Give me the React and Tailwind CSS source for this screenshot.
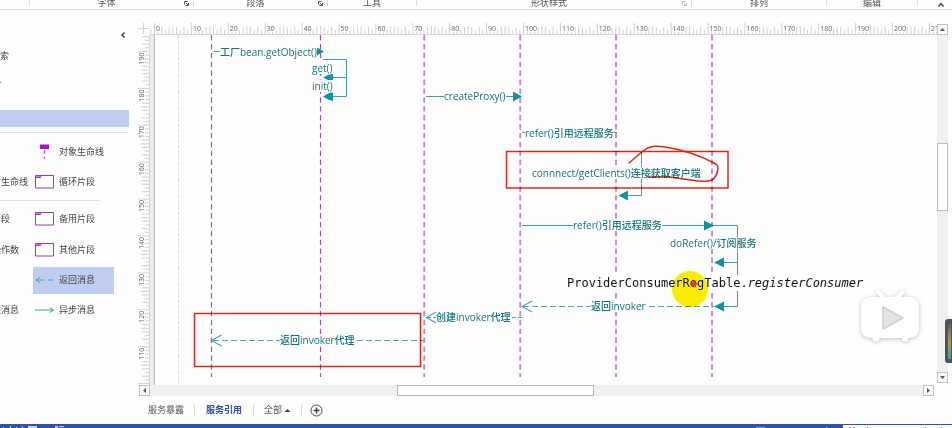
import React from "react";

const SANS = "font-['Open_Sans','Noto_Sans_CJK_SC',sans-serif]";

const groups = [
  { name: "", width: "w-[30px]" },
  { name: "字体", width: "w-[164px]", launcher: true },
  { name: "段落", width: "w-[134px]", launcher: true },
  { name: "工具", width: "w-[89px]" },
  { name: "形状样式", width: "w-[275px]", launcher: true, pale: true },
  { name: "排列", width: "w-[135px]" },
  { name: "编辑", width: "w-[91px]" },
];

function Ribbon() {
  return (
    <header className="flex h-[10px] overflow-hidden border-b border-[#d9dad9]">
      {groups.map((g, i) => (
        <div key={i} className={`${g.width} flex h-[6px] shrink-0 border-r border-[#dcdedc]`}>
          <span className="-mt-[3px] h-3 flex-1 text-center text-[9px] leading-3 text-[#555]">{g.name}</span>
          {g.launcher && (
            <button aria-label={g.name + "设置"} className="w-[10px] shrink-0">
              <svg width="7" height="7" className={g.pale ? "opacity-40" : ""} fill="none" stroke="#555">
                <path d="M1.5 4.5v-3h3M2.5 5.5h3M5.5 3v2.5M3 3l2.5 2.5" />
              </svg>
            </button>
          )}
        </div>
      ))}
      <div className="flex flex-1 justify-end pr-[7px]">
        <button aria-label="折叠功能区">
          <svg width="8" height="8" fill="none" stroke="#444" strokeWidth="1.4">
            <path d="M1.5 5.5 4 2.5l2.5 3" />
          </svg>
        </button>
      </div>
    </header>
  );
}

function FrameIcon() {
  return (
    <svg width="20" height="14" fill="none" stroke="#9b3bb5">
      <path d="M.5 .5h18v12.500h-18zM.5 2.500h5l1-2" />
      <path d="M1 1h5v1H1z" fill="#c78ad8" stroke="none" />
    </svg>
  );
}

function LifelineIcon() {
  return (
    <svg width="20" height="18">
      <path d="M5 1.500h9v4.500H5z" fill="#a312cf" />
      <path d="M9.500 7v4M9.500 14v2" stroke="#b05cc8" strokeWidth="1.300" />
    </svg>
  );
}

function ReturnIcon() {
  return (
    <svg width="20" height="8" fill="none" stroke="#3aa5c2">
      <path d="M5 1.500.800 4 5 6.500M1 4h8M13 4h5" />
    </svg>
  );
}

function AsyncIcon() {
  return (
    <svg width="20" height="8" fill="none" stroke="#2fa3b5">
      <path d="M0 4h18M14.500 1.500 18.500 4l-4 2.500" />
    </svg>
  );
}

function Shape({ left, name, icon, selected, height = "h-[30px]" }) {
  return (
    <div className={`flex ${height} items-center`}>
      <span className="w-[41px] shrink-0 whitespace-nowrap">{left}</span>
      <button
        className={`flex h-[27px] w-[81px] items-center gap-1 whitespace-nowrap pl-[2px] ${selected ? "bg-[#bfcdf1]" : ""}`}
      >
        {icon}
        <span>{name}</span>
      </button>
    </div>
  );
}

function Stencils() {
  return (
    <aside className="w-[138px] shrink-0 overflow-hidden text-[9px] leading-3 text-[#444]">
      <div className="flex h-[50px] items-center justify-end pr-3">
        <button aria-label="收起形状窗格">
          <svg width="6" height="8" fill="none" stroke="#333" strokeWidth="1.400">
            <path d="M4.500 1.500 2 4l2.500 2.500" />
          </svg>
        </button>
      </div>
      <div className="-mt-[10px] flex h-3 items-center">索</div>
      <div className="mt-5 h-px w-px bg-[#777]" />
      <div className="mt-[27px] h-[17px] w-[129px] bg-[#bfcdf1]" />
      <div className="mt-[5px] w-[129px] border-b border-[#dfe0e3]" />
      <div className="-ml-2 pt-1">
        <Shape name="对象生命线" icon={<LifelineIcon />} />
        <Shape left="对生命线" name="循环片段" icon={<FrameIcon />} />
      </div>
      <div className="mt-[3px] w-[100px] border-b border-[#dfe0e3]" />
      <div className="-ml-2 pt-[2px]">
        <Shape left="片段" name="备用片段" icon={<FrameIcon />} height="h-[31px]" />
        <Shape left="操作数" name="其他片段" icon={<FrameIcon />} height="h-[31px]" />
        <Shape name="返回消息" icon={<ReturnIcon />} selected />
        <Shape left="联消息" name="异步消息" icon={<AsyncIcon />} />
      </div>
    </aside>
  );
}

const UNIT = 3.69;

function TopRuler() {
  const ticks = [];
  for (let i = -1; i <= 220; i++) {
    const top = i % 10 === 0 ? 0 : i % 5 === 0 ? 3 : i % 2 === 0 ? 4 : 7;
    ticks.push(<path key={i} d={`M${(4.5 + i * UNIT).toFixed(1)} ${top}V12`} />);
  }
  return (
    <div className="h-3 min-w-0 flex-1 overflow-hidden border-b border-[#d5d7d5]">
      <svg width="820" height="12">
        <g stroke="#cfd1cf">{ticks}</g>
        <g fill="#666" className="text-[7px]">
          {Array.from({ length: 22 }, (_, i) => (
            <text key={i} x={6 + i * 10 * UNIT} y="8" stroke="#fdfefd" strokeWidth="2" paintOrder="stroke">
              {i * 10}
            </text>
          ))}
        </g>
      </svg>
    </div>
  );
}

function SideRuler() {
  const ticks = [];
  for (let i = -4; i <= 90; i++) {
    const left = i % 10 === 0 ? 0 : i % 5 === 0 ? 3 : i % 2 === 0 ? 4 : 7;
    ticks.push(<path key={i} d={`M${left} ${(16.5 + i * UNIT).toFixed(1)}H12`} />);
  }
  return (
    <div className="relative w-3 shrink-0 overflow-hidden border-r border-[#d5d7d5]">
      <svg width="12" height="900" className="absolute inset-0">
        <g stroke="#cfd1cf">{ticks}</g>
        <g fill="#666" className="text-[7px]" textAnchor="end">
          {Array.from({ length: 9 }, (_, i) => (
            <text
              key={i}
              transform={`translate(6 ${17.5 + i * 10 * UNIT}) rotate(-90)`}
              stroke="#fdfefd"
              strokeWidth="2"
              paintOrder="stroke"
            >
              {190 - i * 10}
            </text>
          ))}
        </g>
      </svg>
    </div>
  );
}

// Diagram coordinates are measured from the canvas's top-left corner.
const labels = [
  { x: 70, y: 17, text: "工厂bean.getObject()" },
  { x: 162, y: 33, text: "get()" },
  { x: 162, y: 51, text: "init()" },
  { x: 294, y: 61, text: "createProxy()" },
  { x: 375, y: 98, text: "refer()引用远程服务" },
  { x: 382, y: 138, text: "connnect/getClients()连接获取客户端" },
  { x: 423, y: 190, text: "refer()引用远程服务" },
  { x: 520, y: 208, text: "doRefer()/订阅服务" },
  { x: 441, y: 271, text: "返回invoker" },
  { x: 286, y: 282, text: "创建invoker代理" },
  { x: 130, y: 305, text: "返回invoker代理" },
];

function Diagram() {
  return (
    <div className="relative min-h-[300px] min-w-0 flex-1 overflow-hidden">
      <svg className="absolute inset-0" width="800" height="900" fill="none">
        <path d="M0 0h4v900H0z" fill="#ededed" />
        <path d="M4.500 0v900" stroke="#b9bbbd" />
        <path d="M28.500 0v900" stroke="#dcdcdc" strokeDasharray="4 1.500" />
        <g stroke="#a352b5" strokeWidth="1.200" strokeDasharray="5.400 3.500">
          <path d="M61.500 0v342M170.500 0v342" />
        </g>
        <g stroke="#bd85d3" strokeWidth="1.800" strokeDasharray="5.400 3.500">
          <path d="M274.200 0v342M370.200 0v342M466 0v342M562 0v342" />
        </g>
        <g stroke="#3f9fa9">
          <path d="M64 16.500h103M173 24.500h23.500v37H183M183 42.500h13.500" />
          <path d="M276 61.500h88M372 97.500h95M491.500 117v43.500H478" />
          <path d="M372 190.500h184M562 190.500h25.500v81H574M587.500 227.500H574" />
        </g>
        <g fill="#0d949f">
          <path d="M167 12.500v8l7-4zM183 39v7l-4-.500-6-3 6-3zM183 57.500v8.500l-4-1-6-3.500 6-3.500z" />
          <path d="M363 56.500v10l9-5zM478 155.500v10l-9.500-5zM554 185.500v10l10-5z" />
          <path d="M574 222.500v10l-10-5zM574 266.500v10l-10-5z" />
        </g>
        <g stroke="#4da7b1" strokeWidth="1.200">
          <path d="M373 271.500h191" strokeDasharray="6 3" />
          <path d="M362 282.500h10M277 282.500h9" strokeDasharray="4 2" />
          <path d="M63 305.500h211" strokeDasharray="6 3" />
          <path d="m382 266-10 5.500 10 5.500M286 277l-9.500 5.500L286 288M71.500 300l-10 5.500 10 5.500" />
        </g>
      </svg>
      {labels.map((l) => (
        <span
          key={l.x + "-" + l.y}
          className="absolute -translate-y-1/2 whitespace-nowrap bg-[#fdfefd] text-[10px] font-medium leading-3 text-[#15757c]"
          style={{ left: l.x, top: l.y }}
        >
          {l.text}
        </span>
      ))}
      <span className="absolute left-[417px] top-[240px] whitespace-nowrap bg-[#fdfefd] font-['DejaVu_Sans_Mono',monospace] text-[12px] leading-4 text-[#111]">
        ProviderConsumerRegTable.<i>registerConsumer</i>
      </span>
      <svg className="absolute inset-0 mix-blend-multiply" width="800" height="400" fill="none">
        <circle cx="540" cy="254" r="18" fill="#fdee00" />
        <g stroke="#dc2a1c" strokeWidth="1.500">
          <path d="M356.500 116.500H578v36.500H356.500zM44.500 278.500h226v53h-226z" />
          <path
            d="M479 128 493 116C500 110 506 111 515 112 535 115 553 122 566 129 570 132 567 142 562 145 555 148 540 145 520 142L499 142"
            strokeLinecap="round"
          />
        </g>
      </svg>
      <svg className="absolute left-[540px] top-[245px]" width="8" height="8" fill="#ee3a16">
        <path d="M4 0 5.500 2.500 8 4 5.500 5.500 4 8 2.500 5.500 0 4 2.500 2.500z" />
      </svg>
      <svg className="absolute right-[15px] top-[250px] drop-shadow-[0_1px_2px_rgba(0,0,0,0.25)]" width="66" height="60">
        <path d="m22 7 8 8M47 7l-8 8" stroke="#fff" strokeWidth="4" strokeLinecap="round" />
        <rect x="5" y="12" width="58" height="41" rx="9" fill="#fff" />
        <circle cx="20" cy="53" r="3.500" fill="#fff" />
        <circle cx="49" cy="53" r="3.500" fill="#fff" />
        <path d="M27 22v22l20-11z" fill="#e3e3e3" stroke="#d0d0d0" strokeWidth="1.500" strokeLinejoin="round" />
      </svg>
    </div>
  );
}

const arrows = {
  up: "M1 5h5L3.500 2z",
  down: "M1 2h5L3.500 5z",
  left: "M5 1v5L2 3.500z",
  right: "M2 1v5l3-2.500z",
};

function ScrollButton({ dir, label }) {
  return (
    <button
      aria-label={label}
      className="flex size-[11px] shrink-0 items-center justify-center border border-[#bfc1c1] bg-[#fdfefd]"
    >
      <svg width="7" height="7" fill="#555">
        <path d={arrows[dir]} />
      </svg>
    </button>
  );
}

function PageTabs() {
  return (
    <nav className="flex h-[28px] items-center text-[9px] leading-3 text-[#555]">
      <button className="px-[10px]">服务暴露</button>
      <span className="h-3 w-px bg-[#dcdcdc]" />
      <button className="px-[11px] font-bold text-[#2f4fa8]">服务引用</button>
      <span className="h-3 w-px bg-[#dcdcdc]" />
      <button className="flex items-center gap-[2px] px-[10px]">
        全部
        <svg width="7" height="5" fill="#444">
          <path d="M.500 4h6l-3-3z" />
        </svg>
      </button>
      <span className="h-3 w-px bg-[#dcdcdc]" />
      <button aria-label="插入页" className="pl-2">
        <svg width="13" height="13" fill="none" stroke="#444">
          <circle cx="6.500" cy="6.500" r="5.500" />
          <path d="M3.500 6.500h6M6.500 3.500v6" strokeWidth="1.500" />
        </svg>
      </button>
    </nav>
  );
}

function StatusBar() {
  return (
    <footer className="flex h-1 overflow-hidden bg-[#3352a9]">
      <svg width="70" height="4" fill="#c5cfeb">
        <path d="M3 3h1v1H3zM10 2h1v2h-1zM16 3h1v1h-1zM22 2h1v2h-1zM28 2h9v2h-9zM55 2h3v2h-3zM59 2h5v1h-5z" />
      </svg>
      <div className="flex-1" />
      <svg width="87" height="4" fill="#8496cf">
        <path d="M0 3h9v1H0zM70 3h2v1h-2z" />
      </svg>
      <svg width="109" height="4">
        <path d="M0 1h109v3H0z" fill="#fbfcfe" />
        <path d="M6 3h2v1H6zM10 3h2v1h-2z" fill="#dc8a62" />
        <path d="M24 3h1v1h-1zM82 3h1v1h-1zM98 3h1v1h-1z" fill="#6f8fc8" />
      </svg>
    </footer>
  );
}

export default function App() {
  return (
    <div className={`relative flex min-h-screen flex-col overflow-hidden bg-[#fdfefd] ${SANS}`}>
      <Ribbon />
      <div className="flex flex-1">
        <Stencils />
        <main className="flex min-w-0 flex-1 flex-col pt-[13px]">
          <div className="flex flex-1 pr-1">
            <div className="flex min-w-0 flex-1 flex-col">
              <div className="flex">
                <svg width="12" height="12" className="shrink-0" stroke="#c9d2f0">
                  <path d="M5.500 0v11M0 5.500h11" />
                </svg>
                <TopRuler />
              </div>
              <div className="flex flex-1">
                <SideRuler />
                <Diagram />
              </div>
            </div>
            <div className="mb-[2px] mt-px flex w-[11px] shrink-0 flex-col bg-[#f0f0f0]">
              <ScrollButton dir="up" label="向上滚动" />
              <div className="flex-1">
                <div className="mt-[108px] h-[68px] border border-[#b9bbbb] bg-[#fdfefd]" />
              </div>
              <ScrollButton dir="down" label="向下滚动" />
            </div>
          </div>
          <div className="ml-px mr-[18px] flex h-[11px] bg-[#f0f0f0]">
            <ScrollButton dir="left" label="向左滚动" />
            <div className="flex-1">
              <div className="ml-[32%] h-[11px] w-[197px] border border-[#b9bbbb] bg-[#fdfefd]" />
            </div>
            <ScrollButton dir="right" label="向右滚动" />
          </div>
          <PageTabs />
        </main>
      </div>
      <StatusBar />
      <div className="absolute bottom-[65px] right-0 h-[44px] w-[7px] rounded-l-[3px] bg-[#4d5261] py-1 pl-[3px]">
        <div className="h-full w-[3px] bg-linear-to-b from-[#5a5a60] via-[#b39a55] to-[#35a08c]" />
      </div>
    </div>
  );
}
